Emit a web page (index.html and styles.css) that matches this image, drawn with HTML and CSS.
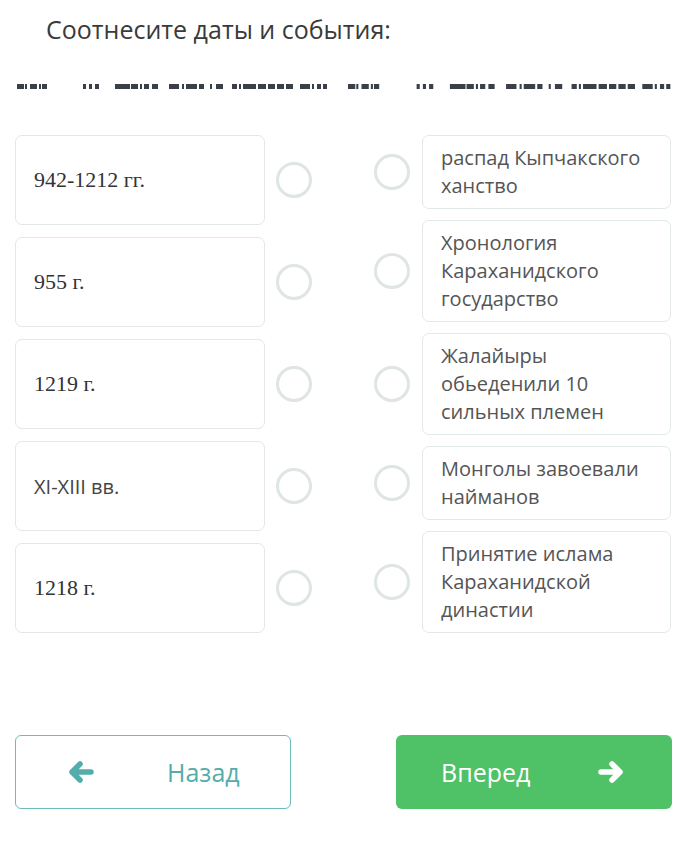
FILE: index.html
```html
<!DOCTYPE html>
<html lang="ru">
<head>
  <meta charset="UTF-8" />
  <meta name="viewport" content="width=device-width, initial-scale=1" />
  <title>Соотнесите даты и события</title>
  <link rel="stylesheet" href="styles.css">
</head>
<body>

  <div class="page">
    <h1 class="title">Соотнесите даты и события:</h1>

    <!-- clipped line of text under the title -->
    <svg class="cut-line" width="691" height="5" viewBox="0 0 691 5">
      <g id="cut" fill="#3b3f47">
        <rect x="17" y="0" width="7" height="5" />
        <rect x="25" y="0" width="2" height="5" />
        <rect x="30" y="0" width="7" height="5" />
        <rect x="39" y="0" width="2" height="5" />
        <rect x="42" y="0" width="5" height="5" />
        <rect x="83" y="0" width="3" height="5" />
        <rect x="89" y="0" width="3" height="5" />
        <rect x="95" y="0" width="4" height="5" />
        <rect x="115" y="0" width="15" height="5" />
        <rect x="131" y="0" width="7" height="5" />
        <rect x="140" y="0" width="2" height="5" />
        <rect x="144" y="0" width="5" height="5" />
        <rect x="152" y="0" width="6" height="5" />
        <rect x="169" y="0" width="10" height="5" />
        <rect x="182" y="0" width="2" height="5" />
        <rect x="186" y="0" width="11" height="5" />
        <rect x="199" y="0" width="5" height="5" />
        <rect x="210" y="0" width="2" height="5" />
        <rect x="216" y="0" width="7" height="5" />
        <rect x="232" y="0" width="5" height="5" />
        <rect x="239" y="0" width="2" height="5" />
        <rect x="243" y="0" width="13" height="5" />
        <rect x="258" y="0" width="8" height="5" />
        <rect x="268" y="0" width="7" height="5" />
        <rect x="277" y="0" width="7" height="5" />
        <rect x="286" y="0" width="7" height="5" />
        <rect x="300" y="0" width="10" height="5" />
        <rect x="312" y="0" width="2" height="5" />
        <rect x="317" y="0" width="4" height="5" />
        <rect x="323" y="0" width="4" height="5" />
      </g>
      <use href="#cut" transform="translate(330.3 0) scale(1.04 1)" />
    </svg>

    <div class="match">
      <div class="col col-left">
        <div class="row">
          <div class="card card-date">942-1212 гг.</div>
          <span class="radio"></span>
        </div>
        <div class="row">
          <div class="card card-date">955 г.</div>
          <span class="radio"></span>
        </div>
        <div class="row">
          <div class="card card-date">1219 г.</div>
          <span class="radio"></span>
        </div>
        <div class="row">
          <div class="card card-date sans">XI-XIII вв.</div>
          <span class="radio"></span>
        </div>
        <div class="row">
          <div class="card card-date">1218 г.</div>
          <span class="radio"></span>
        </div>
      </div>

      <div class="col col-right">
        <div class="row">
          <span class="radio"></span>
          <div class="card card-event">распад Кыпчакского ханство</div>
        </div>
        <div class="row">
          <span class="radio"></span>
          <div class="card card-event">Хронология Караханидского государство</div>
        </div>
        <div class="row">
          <span class="radio"></span>
          <div class="card card-event">Жалайыры обьеденили 10 сильных племен</div>
        </div>
        <div class="row">
          <span class="radio"></span>
          <div class="card card-event">Монголы завоевали найманов</div>
        </div>
        <div class="row">
          <span class="radio"></span>
          <div class="card card-event">Принятие ислама Караханидской династии</div>
        </div>
      </div>
    </div>

    <div class="nav">
      <button class="nav-btn btn-back">
        <svg width="26" height="22" viewBox="0 0 26 22">
          <path d="M23 11H4M12 3L4 11l8 8" fill="none" stroke="currentColor" stroke-width="5.5" stroke-linecap="round" stroke-linejoin="round" />
        </svg>
        <span>Назад</span>
      </button>
      <button class="nav-btn btn-next">
        <span>Вперед</span>
        <svg width="26" height="22" viewBox="0 0 26 22">
          <path d="M3 11h19M14 3l8 8-8 8" fill="none" stroke="currentColor" stroke-width="5.5" stroke-linecap="round" stroke-linejoin="round" />
        </svg>
      </button>
    </div>
  </div>

</body>
</html>
```

FILE: styles.css
```css
body {
  margin: 0;
  padding: 0;
  background: #fff;
  font-family: 'Open Sans', 'Noto Sans', sans-serif;
  color: #444;
}

.page {
  width: 691px;
  height: 867px;
  box-sizing: border-box;
  padding-top: 11px;
}

.title {
  margin: 0 0 0 46px;
  font-size: 25px;
  font-weight: 400;
  line-height: 36px;
  color: #3a3a3a;
}

.cut-line {
  display: block;
  margin-top: 37px;
}

.match {
  display: grid;
  grid-template-columns: 297px 297px;
  column-gap: 62px;
  padding-left: 15px;
  margin-top: 46px;
}

.col {
  display: flex;
  flex-direction: column;
}

.col-left {
  gap: 12px;
}

.col-right {
  gap: 11px;
}

.row {
  display: flex;
  align-items: center;
}

.col-left .row {
  gap: 11px;
}

.col-right .row {
  gap: 12px;
}

.card {
  box-sizing: border-box;
  width: 250px;
  background: #fff;
  border: 1px solid #e2e8e8;
  border-radius: 7px;
}

.card-date {
  height: 90px;
  display: flex;
  align-items: center;
  padding-left: 18px;
  font-family: 'Liberation Serif', 'DejaVu Serif', serif;
  font-size: 22px;
  color: #333;
}

.card-date.sans {
  font-family: 'Open Sans', 'Noto Sans', sans-serif;
  font-size: 20px;
  color: #444;
}

.card-event {
  padding: 8px 12px 8px 18px;
  font-size: 20px;
  line-height: 28px;
  color: #555;
}

.radio {
  flex: none;
  width: 36px;
  height: 36px;
  box-sizing: border-box;
  border: 3px solid #dfe4e4;
  border-radius: 50%;
}

.nav {
  display: flex;
  justify-content: space-between;
  padding: 0 19px 0 15px;
  margin-top: 102px;
}

.nav-btn {
  box-sizing: border-box;
  width: 276px;
  height: 74px;
  border-radius: 6px;
  display: flex;
  align-items: center;
  font-family: 'Open Sans', 'Noto Sans', sans-serif;
  font-size: 25px;
  cursor: pointer;
}

.btn-back {
  background: #fff;
  border: 1px solid #6bbcbc;
  color: #52adac;
  padding: 0 0 0 52px;
  gap: 73px;
}

.btn-next {
  background: #4fc166;
  border: none;
  color: #fff;
  padding: 0 0 0 45px;
  gap: 68px;
}
```
